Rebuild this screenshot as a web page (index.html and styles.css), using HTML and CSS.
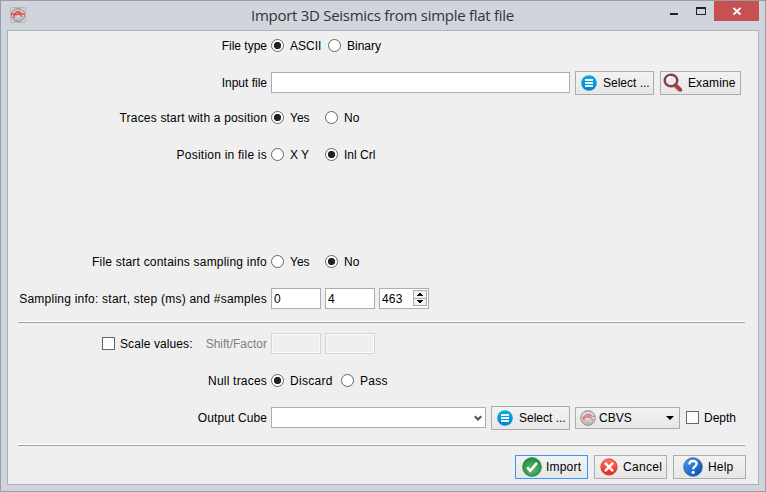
FILE: index.html
```
<!DOCTYPE html>
<html lang="en">
<head>
<meta charset="utf-8">
<title>Import 3D Seismics from simple flat file</title>
<link rel="stylesheet" href="styles.css">
</head>
<body>
<svg width="0" height="0" class="defs">
  <defs>
    <linearGradient id="silver" x1="0" y1="0" x2="0" y2="1"><stop offset="0" stop-color="#b5b5b5"/><stop offset=".5" stop-color="#dedede"/><stop offset="1" stop-color="#a9a9a9"/></linearGradient>
    <radialGradient id="green" cx=".5" cy=".6" r=".6"><stop offset="0" stop-color="#62bb72"/><stop offset="1" stop-color="#1f8a3d"/></radialGradient>
    <linearGradient id="red" x1="0" y1="0" x2="0" y2="1"><stop offset="0" stop-color="#ff7763"/><stop offset="1" stop-color="#e5221c"/></linearGradient>
    <linearGradient id="blue" x1="0" y1="0" x2="1" y2="1"><stop offset="0" stop-color="#4aa0ec"/><stop offset="1" stop-color="#0848a8"/></linearGradient>
    <linearGradient id="cyan" x1="0" y1="0" x2="0" y2="1"><stop offset="0" stop-color="#06aee4"/><stop offset="1" stop-color="#0784cb"/></linearGradient>
    <symbol id="list" viewBox="0 0 16 16"><circle cx="8" cy="8" r="7.8" fill="url(#cyan)"/><path d="M4 4h8v2H4zM4 7h8v2H4zM4 10h8v2H4z" fill="#e8f7fd"/></symbol>
    <symbol id="seis" viewBox="0 0 16 16"><circle cx="8" cy="8" r="7.4" fill="url(#silver)" stroke="#999"/><path d="M3 4.5Q8 1 13 4.5" stroke="#eee" fill="none"/><path d="M1.5 8 5 6.5 6 5 10 4.5 11.5 6 14.5 6.5M3 9.5 5 7.5 10 7 12 9 13 11M4 8v3M7 6h3" fill="none" stroke="#e07070" stroke-width="1.1"/></symbol>
  </defs>
</svg>
<div class="window">
  <header class="titlebar">
    <svg class="app-icon" viewBox="0 0 16 16"><rect x=".5" y=".5" width="15" height="15" rx="1" fill="#d0d2d5" stroke="#b2b5b8"/><circle cx="8" cy="8" r="6.6" fill="url(#silver)" stroke="#939393"/><path d="M1 7h4l1.5-2h3L11 7h3.5M4 11V8l6-1 2 3M6 5.5h4" fill="none" stroke="#ee4444" stroke-width="1.4"/></svg>
    <h1 class="title">Import 3D Seismics from simple flat file</h1>
    <svg class="caption" width="88" height="20" viewBox="0 0 88 20" shape-rendering="crispEdges"><path d="M-1 12h8v2h-8z" fill="#222"/><path d="M25 6h10v8H25zm1 2v5h8V8z" fill="#222" fill-rule="evenodd"/><path d="M43 0h45v20H43z" fill="#c75050"/><path d="m62.5 7 7 6.5m0-6.5-7 6.5" stroke="#fff" stroke-width="1.8" shape-rendering="auto"/></svg>
  </header>
  <main class="client">
    <div class="row r-type"><span class="label">File type</span>
      <span class="opt o57"><i class="radio on"></i>ASCII</span><span class="opt"><i class="radio"></i>Binary</span></div>
    <div class="row r-input"><span class="label">Input file</span>
      <span class="field path"></span>
      <span class="btn select"><svg width="16" height="16"><use href="#list"/></svg>Select&nbsp;...</span>
      <span class="btn examine"><svg width="21" height="20" viewBox="0 0 21 20"><path d="m12.5 12.5 4.8 4.8" stroke="#b9a3a3" stroke-width="5"/><ellipse cx="8" cy="7.5" rx="6.3" ry="5.8" fill="#e8eaeb" stroke="#8c3f44" stroke-width="2.4"/><path d="M4.5 7Q5 4 8 4" stroke="#fff" stroke-width="2" fill="none"/><path d="m12.3 12 5.2 5" stroke="#a83c40" stroke-width="3.5" stroke-linecap="round"/></svg>Examine</span></div>
    <div class="row r-traces"><span class="label">Traces start with a position</span>
      <span class="opt o54"><i class="radio on"></i>Yes</span><span class="opt"><i class="radio"></i>No</span></div>
    <div class="row r-pos"><span class="label">Position in file is</span>
      <span class="opt o54"><i class="radio"></i>X Y</span><span class="opt"><i class="radio on"></i>Inl Crl</span></div>
    <div class="row r-start"><span class="label">File start contains sampling info</span>
      <span class="opt o54"><i class="radio"></i>Yes</span><span class="opt"><i class="radio on"></i>No</span></div>
    <div class="row r-samp"><span class="label">Sampling info: start, step (ms) and #samples</span>
      <span class="field num">0</span><span class="field num">4</span><span class="field num">463<svg class="spin" width="14" height="16" viewBox="0 0 14 16" shape-rendering="crispEdges"><path d="M.5.5h13v15H.5z" fill="#f1f1f1" stroke="#aaa"/><path d="M0 8.5h14" stroke="#aaa"/><path d="M6 3h2v1H6zM5 4h4v1H5zM4 5h6v1H4zM4 10h6v1H4zM5 11h4v1H5zM6 12h2v1H6z" fill="#111"/></svg></span></div>
    <div class="sep"></div>
    <div class="row r-scale"><span class="label scale"><span class="opt"><i class="check"></i>Scale values:</span><span class="dim">Shift/Factor</span></span>
      <span class="field num off"></span><span class="field num off"></span></div>
    <div class="row r-null"><span class="label">Null traces</span>
      <span class="opt o70"><i class="radio on"></i>Discard</span><span class="opt"><i class="radio"></i>Pass</span></div>
    <div class="row r-out"><span class="label">Output Cube</span>
      <span class="field combo"><svg width="8" height="7" viewBox="0 0 8 7"><path d="m.8 1.2 3.2 3.3 3.2-3.3" fill="none" stroke="#505050" stroke-width="2"/></svg></span>
      <span class="btn select"><svg width="16" height="16"><use href="#list"/></svg>Select&nbsp;...</span>
      <span class="btn format"><svg width="16" height="16"><use href="#seis"/></svg>CBVS<i class="drop"></i></span>
      <span class="opt depth"><i class="check"></i>Depth</span></div>
    <div class="sep second"></div>
    <footer class="actions">
      <span class="btn act import"><svg width="20" height="20" viewBox="0 0 20 20"><circle cx="10" cy="10" r="9.4" fill="url(#green)" stroke="#2c8848" stroke-width=".8"/><path d="m5.2 10.2 3 3.7 6.8-8" fill="none" stroke="#fff" stroke-width="2.5"/></svg>Import</span>
      <span class="btn act cancel"><svg width="18" height="18" viewBox="0 0 18 18"><circle cx="9" cy="9" r="8.1" fill="url(#red)" stroke="#d83c30"/><path d="m5.7 5.7 6.6 6.6m0-6.6-6.6 6.6" stroke="#fff" stroke-width="2.6" stroke-linecap="round"/></svg>Cancel</span>
      <span class="btn act help"><svg width="20" height="20" viewBox="0 0 20 20"><circle cx="10" cy="10" r="9.3" fill="url(#blue)" stroke="#2860ac" stroke-width=".8"/><path d="M6.3 7.5C6.5 2.8 14 3 13.6 7c-.2 2.4-3.4 2.4-3.4 5.2" fill="none" stroke="#fff" stroke-width="2.4"/><circle cx="10.2" cy="15.3" r="1.6" fill="#fff"/></svg>Help</span>
    </footer>
  </main>
</div>
</body>
</html>
```
FILE: styles.css
```
* { box-sizing: border-box; }
body { margin: 0; font: 12px/14px "Liberation Sans", Arial, sans-serif; color: #000; }
svg { flex: none; }
.defs { position: absolute; }
.window { width: 766px; height: 492px; border: 1px solid #9a9ca6; background: #d0d5dd; padding: 0 6px; }
.titlebar { height: 29px; display: flex; align-items: flex-start; }
.app-icon { width: 16px; height: 16px; margin: 6px 0 0 3px; }
.title { flex: 1; margin: 4px 0 0; padding-left: 225px; font: 15px/20px "Open Sans", "Noto Sans", sans-serif; letter-spacing: -.28px; color: #333; white-space: nowrap; }
.caption { overflow: visible; }
.client { width: 752px; height: 455px; border: 1px solid #adb1b8; background: #efefef; padding-top: 3px; }
.row { height: 24px; display: flex; align-items: center; white-space: nowrap; }
.label { width: 259px; margin-right: 4px; text-align: right; flex: none; }
.r-input { margin-top: 13px; }
.r-traces { margin-top: 11px; }
.r-pos { margin-top: 13px; }
.r-start { margin-top: 83px; }
.r-samp { margin-top: 13px; }
.r-scale { margin-top: 9px; }
.r-null, .r-out { margin-top: 13px; }
.r-traces .label { letter-spacing: .185px; }
.r-pos .label { letter-spacing: .23px; }
.r-start .label { letter-spacing: .21px; }
.r-samp .label { letter-spacing: .235px; }
.r-null .label { letter-spacing: .2px; }
.r-out .label { letter-spacing: .1px; }
.r-null .opt { letter-spacing: .3px; }
.opt { display: flex; align-items: center; gap: 6px; }
.o57 { width: 57px; }
.o54 { width: 54px; }
.o70 { width: 70px; }
.radio { width: 13px; height: 13px; margin-bottom: 1px; border: 1px solid #666; border-radius: 50%; background: #fff; flex: none; }
.radio.on { background: radial-gradient(circle, #222 0 3.3px, #fff 4px); }
.check { width: 13px; height: 13px; margin-bottom: 1px; border: 1px solid #666; background: #fff; flex: none; }
.field { height: 21px; margin-bottom: 1px; border: 1px solid #abadb3; background: #fff; display: flex; align-items: center; }
.path { width: 299px; margin-right: 5px; }
.num { width: 50px; margin-right: 4px; padding-left: 2px; letter-spacing: .2px; }
.spin { margin: 0 1px 1px auto; }
.off { background: #efefef; border-color: #d5d5d5; box-shadow: inset 0 0 0 1px #fbfbfb; }
.btn { height: 24px; border: 1px solid #acacac; background: linear-gradient(#f2f2f2, #e7e7e7); display: flex; align-items: center; }
.select { width: 79px; padding-left: 5px; gap: 6px; margin-right: 6px; }
.examine { width: 81px; padding-left: 2px; gap: 4px; letter-spacing: .12px; }
.sep { height: 2px; margin: 10px 13px 0 10px; border-top: 1px solid #fff; border-bottom: 1px solid #a0a0a0; }
.second { margin-top: 14px; }
.scale { display: flex; justify-content: flex-end; gap: 13px; }
.scale .opt { gap: 5px; letter-spacing: .1px; }
.dim { color: #808080; }
.combo { width: 215px; margin-right: 5px; justify-content: flex-end; padding: 1px 3px 0 0; }
.format { width: 105px; height: 22px; padding: 0 5px 0 4px; gap: 3px; margin-right: 6px; }
.r-out .select { margin-right: 5px; }
.drop { margin-left: auto; border: 4px solid transparent; border-top-color: #000; border-bottom: 0; }
.depth { gap: 5px; }
.actions { display: flex; justify-content: flex-end; gap: 6px; margin: 9px 12px 0 0; }
.act { width: 73px; }
.import { border-color: #3399ff; padding-left: 6px; gap: 4px; letter-spacing: .2px; }
.cancel { padding-left: 5px; gap: 5px; letter-spacing: .3px; }
.help { padding-left: 9px; gap: 5px; letter-spacing: .2px; }
```
